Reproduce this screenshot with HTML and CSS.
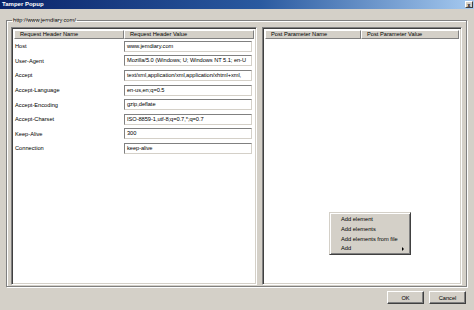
FILE: index.html
```html
<!DOCTYPE html>
<html lang="en">
<head>
    <meta charset="utf-8">
    <title>Tamper Popup</title>
    <link rel="stylesheet" href="styles.css">
</head>
<body>
    <div class="titlebar">
        <span class="title">Tamper Popup</span>
        <span class="close-btn">x</span>
    </div>

    <fieldset class="groupbox">
        <legend>http://www.jemdiary.com/</legend>
        <div class="panes">
            <div class="pane pane-left">
                <div class="list-head">
                    <div class="col-head col-name">Request Header Name</div>
                    <div class="col-head col-value">Request Header Value</div>
                </div>
                <div class="row"><div class="cell-name">Host</div><div class="field">www.jemdiary.com</div></div>
                <div class="row"><div class="cell-name">User-Agent</div><div class="field">Mozilla/5.0 (Windows; U; Windows NT 5.1; en-U</div></div>
                <div class="row"><div class="cell-name">Accept</div><div class="field">text/xml,application/xml,application/xhtml+xml,</div></div>
                <div class="row"><div class="cell-name">Accept-Language</div><div class="field">en-us,en;q=0.5</div></div>
                <div class="row"><div class="cell-name">Accept-Encoding</div><div class="field">gzip,deflate</div></div>
                <div class="row"><div class="cell-name">Accept-Charset</div><div class="field">ISO-8859-1,utf-8;q=0.7,*;q=0.7</div></div>
                <div class="row"><div class="cell-name">Keep-Alive</div><div class="field">300</div></div>
                <div class="row"><div class="cell-name">Connection</div><div class="field">keep-alive</div></div>
            </div>
            <div class="splitter"></div>
            <div class="pane pane-right">
                <div class="list-head">
                    <div class="col-head col-post-name">Post Parameter Name</div>
                    <div class="col-head col-post-value">Post Parameter Value</div>
                </div>
            </div>
        </div>
    </fieldset>

    <div class="footer">
        <button class="btn">OK</button>
        <button class="btn">Cancel</button>
    </div>

    <div class="context-menu">
        <div class="menu-item">Add element</div>
        <div class="menu-item">Add elements</div>
        <div class="menu-item">Add elements from file</div>
        <div class="menu-item has-sub">Add <span class="sub-arrow"></span></div>
    </div>
</body>
</html>
```

FILE: styles.css
```css
:root {
    --color-face: #d4d0c8;
    --color-shadow: #808080;
    --color-dark: #404040;
    --color-light: #ffffff;
    --color-text: #000000;
    --font-size: 5.7px;
}

* {
    box-sizing: border-box;
}

body {
    width: 474px;
    height: 310px;
    margin: 0;
    overflow: hidden;
    position: relative;
    display: flex;
    flex-direction: column;
    background: var(--color-face);
    font-family: 'Liberation Sans', Arial, sans-serif;
    font-size: var(--font-size);
    color: var(--color-text);
}

.titlebar {
    height: 9px;
    flex-shrink: 0;
    display: flex;
    align-items: center;
    justify-content: space-between;
    padding: 0 1px 0 2px;
    background: linear-gradient(to right, #0a246a 0%, #2a5aa0 55%, #a6caf0 100%);
}

.title {
    color: #ffffff;
    font-weight: bold;
    font-size: 6px;
    line-height: 6px;
    margin-top: -1px;
}

.close-btn {
    width: 8px;
    height: 7px;
    line-height: 6px;
    text-align: center;
    font-size: 5px;
    font-weight: bold;
    background: var(--color-face);
    border: 1px solid;
    border-color: var(--color-light) var(--color-dark) var(--color-dark) var(--color-light);
    margin-top: -1px;
}

.groupbox {
    margin: 8px 0 0 6px;
    width: 461px;
    flex-shrink: 0;
    padding: 3px 4px 1px 4px;
    border: 1px solid var(--color-shadow);
    box-shadow: inset 1px 1px var(--color-light), 1px 1px var(--color-light);
    min-inline-size: 0;
}

.groupbox legend {
    padding: 0 1px;
    margin-left: 1px;
    line-height: 7px;
}

.panes {
    height: 258px;
    display: flex;
}

.pane {
    background: #ffffff;
    border: 1px solid;
    border-color: var(--color-shadow) var(--color-light) var(--color-light) var(--color-shadow);
    box-shadow: inset 1px 1px var(--color-dark), inset -1px -1px var(--color-face);
    padding: 2px;
    overflow: hidden;
}

.pane-left {
    width: 246px;
}

.pane-right {
    flex: 1;
}

.splitter {
    width: 5px;
}

.list-head {
    display: flex;
    height: 9px;
}

.col-head {
    height: 9px;
    line-height: 7px;
    padding-left: 5px;
    background: var(--color-face);
    border: 1px solid;
    border-color: var(--color-light) var(--color-shadow) var(--color-shadow) var(--color-light);
    white-space: nowrap;
}

.col-name {
    width: 110px;
}

.col-value {
    flex: 1;
}

.col-post-name {
    width: 96px;
}

.col-post-value {
    flex: 1;
}

.row {
    display: flex;
    align-items: center;
    height: 14.6px;
}

.cell-name {
    width: 110px;
    padding-left: 1px;
}

.field {
    width: 128px;
    height: 11px;
    line-height: 9px;
    padding-left: 2px;
    white-space: nowrap;
    overflow: hidden;
    letter-spacing: -0.05px;
    background: #ffffff;
    border: 1px solid;
    border-color: var(--color-shadow) var(--color-face) var(--color-face) var(--color-shadow);
}

.footer {
    display: flex;
    justify-content: flex-end;
    gap: 5px;
    padding: 4px 8px 0 0;
}

.btn {
    width: 37px;
    height: 13px;
    padding: 0;
    font-family: inherit;
    font-size: var(--font-size);
    color: var(--color-text);
    background: var(--color-face);
    border: 1px solid;
    border-color: var(--color-light) var(--color-dark) var(--color-dark) var(--color-light);
    box-shadow: inset -1px -1px var(--color-shadow);
}

.context-menu {
    position: absolute;
    left: 329px;
    top: 212px;
    width: 82px;
    height: 43px;
    padding: 2px 0;
    background: var(--color-face);
    border: 1px solid;
    border-color: var(--color-face) var(--color-dark) var(--color-dark) var(--color-face);
    box-shadow: inset 1px 1px var(--color-light), inset -1px -1px var(--color-shadow);
}

.menu-item {
    height: 9.8px;
    line-height: 9.8px;
    padding-left: 11px;
    display: flex;
    align-items: center;
}

.sub-arrow {
    margin-left: auto;
    margin-right: 6px;
    width: 0;
    height: 0;
    border-top: 2px solid transparent;
    border-bottom: 2px solid transparent;
    border-left: 2px solid var(--color-text);
}
```
